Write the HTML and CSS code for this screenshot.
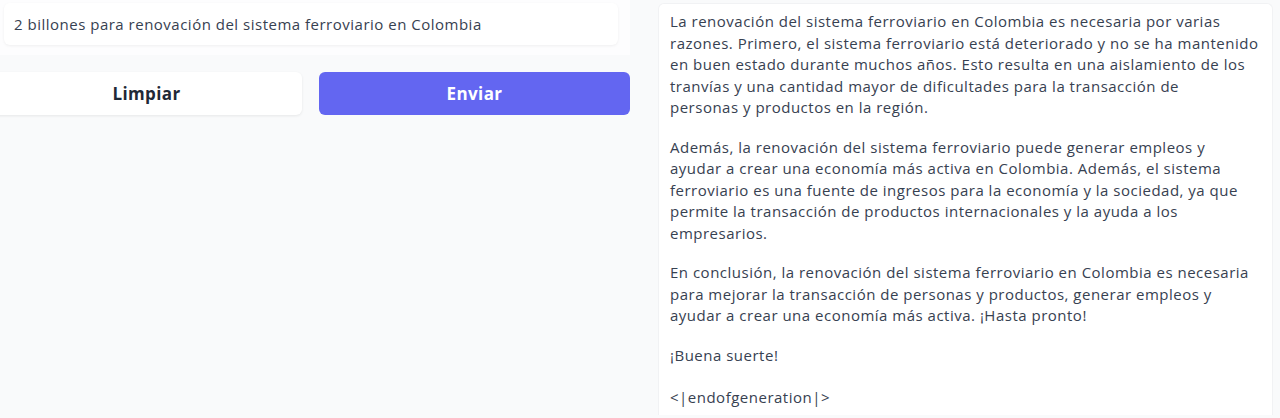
FILE: index.html
```html
<!DOCTYPE html>
<html lang="es">
<head>
<meta charset="utf-8">
<title>Generación</title>
<link rel="stylesheet" href="styles.css">
</head>
<body>
<div class="page">
  <div class="left">
    <div class="prompt-box">
      <div class="prompt">2 billones para renovación del sistema ferroviario en Colombia</div>
    </div>
    <div class="actions">
      <button class="btn btn-clear">Limpiar</button>
      <button class="btn btn-send">Enviar</button>
    </div>
  </div>
  <div class="right">
    <div class="output">
      <p>La renovación del sistema ferroviario en Colombia es necesaria por varias razones. Primero, el sistema ferroviario está deteriorado y no se ha mantenido en buen estado durante muchos años. Esto resulta en una aislamiento de los tranvías y una cantidad mayor de dificultades para la transacción de<br>personas y productos en la región.</p>
      <p>Además, la renovación del sistema ferroviario puede generar empleos y ayudar a crear una economía más activa en Colombia. Además, el sistema ferroviario es una fuente de ingresos para la economía y la sociedad, ya que permite la transacción de productos internacionales y la ayuda a los empresarios.</p>
      <p>En conclusión, la renovación del sistema ferroviario en Colombia es necesaria para mejorar la transacción de personas y productos, generar empleos y ayudar a crear una economía más activa. ¡Hasta pronto!</p>
      <p>¡Buena suerte!</p>
      <p class="end">&lt;|endofgeneration|&gt;</p>
    </div>
  </div>
</div>
</body>
</html>
```

FILE: styles.css
```css
html, body {
  margin: 0;
  padding: 0;
}
body {
  background: #f9fafb;
  font-family: "Open Sans", "Noto Sans", sans-serif;
  color: #374151;
  overflow: hidden;
  height: 418px;
}
.page {
  display: flex;
  align-items: flex-start;
  gap: 28px;
}
.left {
  width: 639px;
  margin-left: -9px;
  flex: none;
}
.prompt-box {
  background: #fdfdfe;
  padding: 3px 12px 10px 13px;
}
.prompt {
  background: #ffffff;
  border-radius: 6px;
  box-shadow: 0 1px 3px rgba(0, 0, 0, 0.06);
  height: 42px;
  box-sizing: border-box;
  padding: 0 10px;
  display: flex;
  align-items: center;
  font-size: 15px;
  letter-spacing: 0.5px;
  color: #374151;
}
.actions {
  display: flex;
  gap: 17px;
  margin-top: 17px;
}
.btn {
  flex: 1;
  height: 43px;
  border: none;
  border-radius: 6px;
  font-family: inherit;
  font-size: 17px;
  letter-spacing: 0.4px;
  font-weight: 700;
}
.btn-clear {
  background: #ffffff;
  color: #1f2937;
  box-shadow: 0 1px 3px rgba(0, 0, 0, 0.08);
}
.btn-send {
  background: #6366f1;
  color: #ffffff;
}
.right {
  flex: 1;
  margin-right: 7px;
  padding-top: 3px;
}
.output {
  background: #ffffff;
  border: 1px solid #f1f2f4;
  border-bottom: none;
  border-radius: 6px 6px 0 0;
  padding: 7px 11px 6px 11px;
  font-size: 15px;
  letter-spacing: 0.5px;
  line-height: 21.5px;
  color: #374151;
}
.output p {
  margin: 0 0 18px 0;
}
.output p.end {
  margin-top: 21px;
  margin-bottom: 0;
}
```
